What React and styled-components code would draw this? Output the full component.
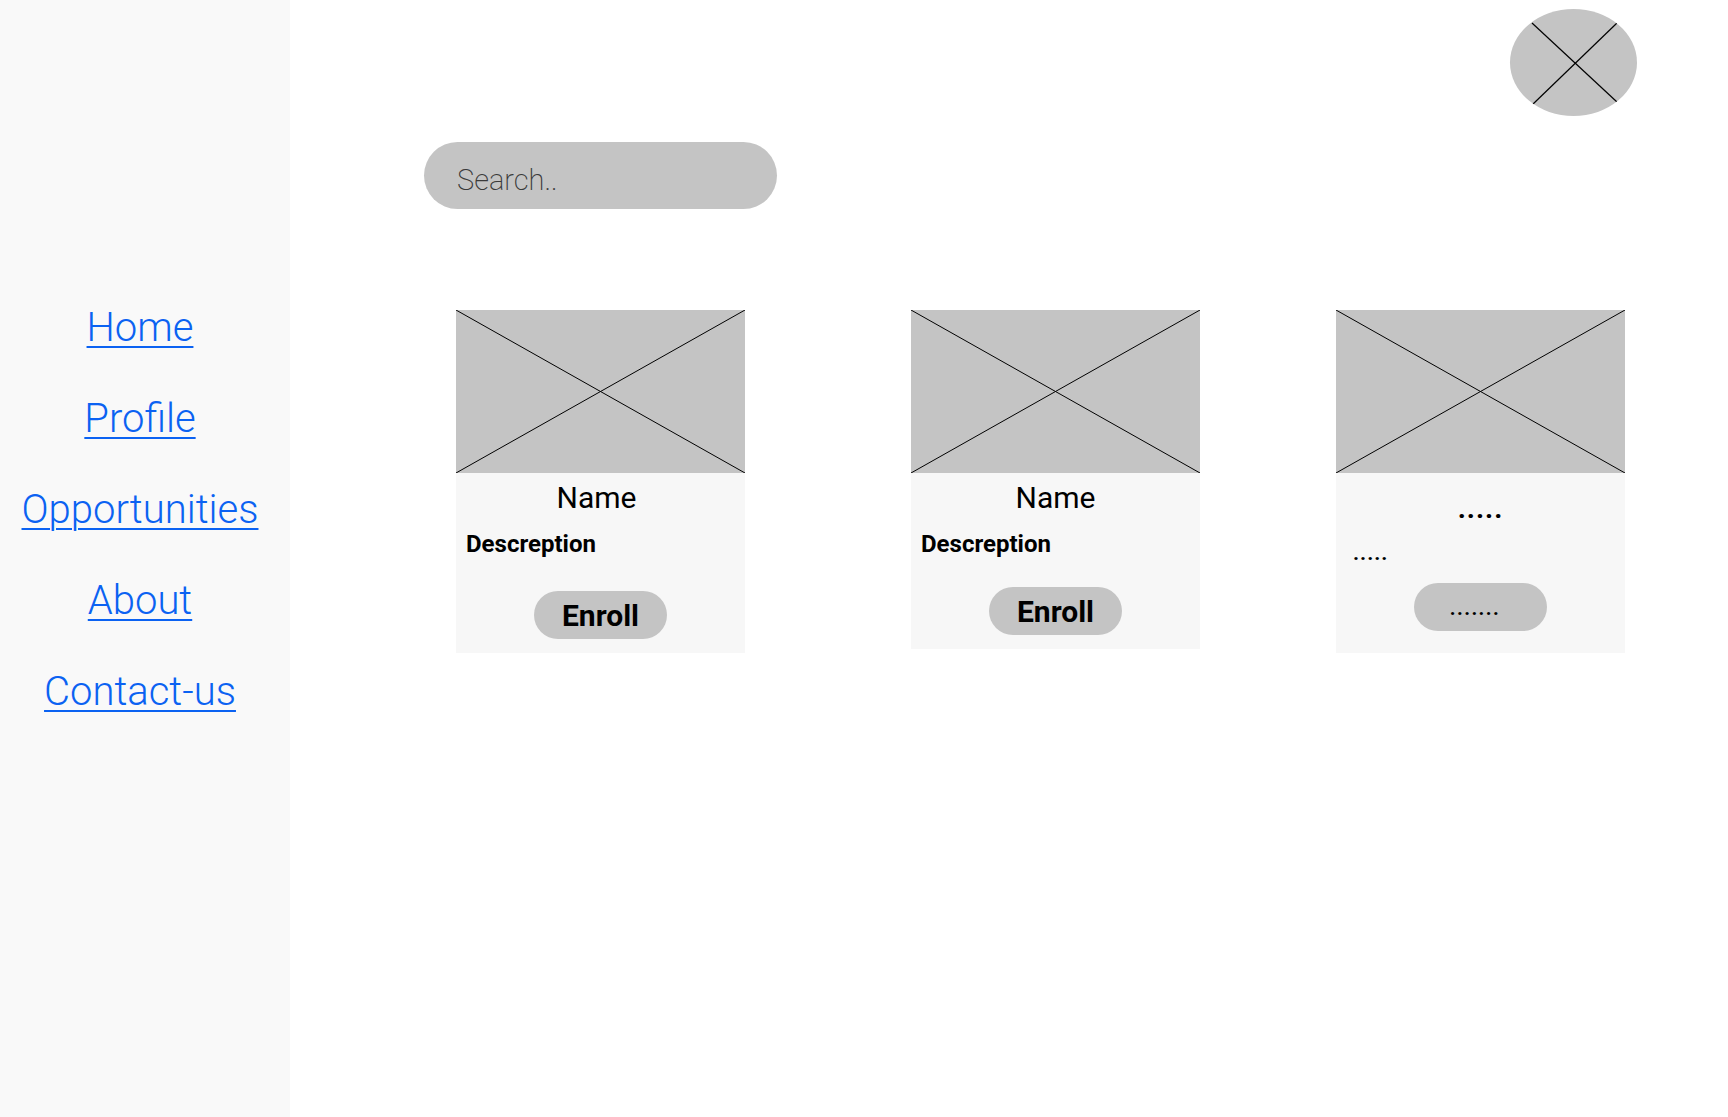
import React from 'react'
import styled, { createGlobalStyle } from 'styled-components'

const GlobalStyle = createGlobalStyle`
  html, body {
    margin: 0;
    padding: 0;
    background: #ffffff;
    font-family: Roboto, "Liberation Sans", sans-serif;
  }
`

const cards = [
  { title: 'Name', desc: 'Descreption', action: 'Enroll', gap: 0, nudge: 8 },
  { title: 'Name', desc: 'Descreption', action: 'Enroll', gap: 166, lift: true },
  { title: '.....', desc: '.....', action: '.......', gap: 136, dots: true },
]

function CrossBox() {
  return (
    <Cross viewBox="0 0 100 100" preserveAspectRatio="none">
      <line x1="0" y1="0" x2="100" y2="100" stroke="#000" strokeWidth="1" vectorEffect="non-scaling-stroke" />
      <line x1="100" y1="0" x2="0" y2="100" stroke="#000" strokeWidth="1" vectorEffect="non-scaling-stroke" />
    </Cross>
  )
}

function Card({ title, desc, action, gap, lift, dots, nudge = 0 }) {
  return (
    <CardBox $gap={gap}>
      <Thumb>
        <CrossBox />
      </Thumb>
      <Body $short={lift}>
        <Title $dots={dots} $nudge={nudge}>{title}</Title>
        <Desc $dots={dots}>{desc}</Desc>
        <Action $dots={dots} $lift={lift}>{action}</Action>
      </Body>
    </CardBox>
  )
}

export default function App() {
  return (
    <Page>
      <GlobalStyle />
      <Sidebar>
        <Nav>
          <NavLink href="#">Home</NavLink>
          <NavLink href="#">Profile</NavLink>
          <NavLink href="#">Opportunities</NavLink>
          <NavLink href="#">About</NavLink>
          <NavLink href="#">Contact-us</NavLink>
        </Nav>
      </Sidebar>
      <Main>
        <TopRow>
          <Avatar>
            <svg width="127" height="107" viewBox="0 0 127 107">
              <line x1="22" y1="14" x2="107" y2="93" stroke="#000" strokeWidth="1.2" />
              <line x1="107" y1="14" x2="22" y2="96" stroke="#000" strokeWidth="1.2" />
            </svg>
          </Avatar>
        </TopRow>
        <Search placeholder="Search.." />
        <CardRow>
          {cards.map((c, i) => (
            <Card key={i} {...c} />
          ))}
        </CardRow>
      </Main>
    </Page>
  )
}

const Page = styled.div`
  display: flex;
  min-height: 1117px;
  width: 100%;
`

const Sidebar = styled.aside`
  width: 290px;
  flex-shrink: 0;
  background: #f9f9f9;
  display: flex;
  justify-content: center;
  padding-right: 10px;
  box-sizing: border-box;
`

const Nav = styled.nav`
  display: flex;
  flex-direction: column;
  align-items: center;
  gap: 42px;
  padding-top: 303px;
`

const NavLink = styled.a`
  font-family: Roboto, "Liberation Sans", sans-serif;
  font-weight: 300;
  font-size: 40px;
  line-height: 49px;
  color: #0b62f2;
  text-decoration: underline;
  text-decoration-thickness: 2px;
  text-underline-offset: 5px;
`

const Main = styled.main`
  flex: 1;
  display: flex;
  flex-direction: column;
`

const TopRow = styled.div`
  display: flex;
  justify-content: flex-end;
  padding: 9px 91px 0 0;
`

const Avatar = styled.div`
  width: 127px;
  height: 107px;
  border-radius: 50%;
  background: #c4c4c4;
  overflow: hidden;
`

const Search = styled.input`
  margin: 26px 0 0 134px;
  width: 353px;
  height: 67px;
  box-sizing: border-box;
  border: none;
  outline: none;
  border-radius: 34px;
  background: #c4c4c4;
  padding: 8px 0 0 33px;
  font-family: Roboto, "Liberation Sans", sans-serif;
  font-weight: 200;
  font-size: 29px;
  color: #333;

  &::placeholder {
    color: #3a3a3a;
    font-weight: 200;
  }
`

const CardRow = styled.section`
  display: flex;
  align-items: flex-start;
  margin-top: 101px;
  padding-left: 166px;
`

const CardBox = styled.article`
  width: 289px;
  margin-left: ${(p) => p.$gap}px;
  display: flex;
  flex-direction: column;
`

const Thumb = styled.div`
  height: 163px;
  background: #c4c4c4;
`

const Cross = styled.svg`
  display: block;
  width: 100%;
  height: 100%;
`

const Body = styled.div`
  height: ${(p) => (p.$short ? 176 : 180)}px;
  box-sizing: border-box;
  background: #f7f7f7;
  display: flex;
  flex-direction: column;
  padding: 9px 10px 0;
`

const Title = styled.div`
  text-align: center;
  font-size: ${(p) => (p.$dots ? 28 : 30)}px;
  font-weight: ${(p) => (p.$dots ? 700 : 400)};
  letter-spacing: ${(p) => (p.$dots ? 1 : 0)}px;
  line-height: 32px;
  margin-top: ${(p) => (p.$dots ? 11 : 0)}px;
  padding-right: ${(p) => p.$nudge}px;
  color: #000;
`

const Desc = styled.div`
  font-size: ${(p) => (p.$dots ? 21 : 24)}px;
  font-weight: 700;
  line-height: 25px;
  letter-spacing: ${(p) => (p.$dots ? 1 : 0)}px;
  margin: ${(p) => (p.$dots ? '16px 0 0 7px' : '18px 0 0')};
  color: #000;
`

const Action = styled.button`
  align-self: center;
  width: 133px;
  height: 48px;
  margin-top: ${(p) => (p.$dots ? 17 : p.$lift ? 30 : 34)}px;
  border: none;
  border-radius: 24px;
  background: #c4c4c4;
  font-family: Roboto, "Liberation Sans", sans-serif;
  font-weight: 700;
  font-size: ${(p) => (p.$dots ? 20 : 30)}px;
  letter-spacing: ${(p) => (p.$dots ? 1.4 : 0)}px;
  color: #000;
  padding: ${(p) => (p.$dots ? '2px 11px 0 0' : '0')};
  cursor: pointer;
`
